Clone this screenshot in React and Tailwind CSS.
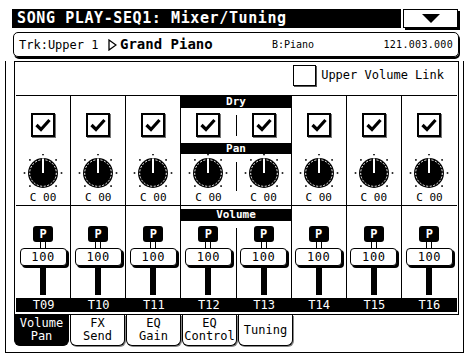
import React from "react";

const mono = { fontFamily: '"DejaVu Sans Mono", "Liberation Mono", monospace' };

const tracks = ["T09", "T10", "T11", "T12", "T13", "T14", "T15", "T16"];
const tabs = [
  ["Volume", "Pan"],
  ["FX", "Send"],
  ["EQ", "Gain"],
  ["EQ", "Control"],
  ["Tuning"],
];

function CheckBox() {
  return (
    <div className="w-[24px] h-[24px] border-2 border-black bg-white shadow-[1px_1px_0_#777] flex items-center justify-center">
      <svg width="18" height="16" viewBox="0 0 18 16">
        <path d="M2.5 8 L7 12.5 L15.5 3" fill="none" stroke="black" strokeWidth="3.2" />
      </svg>
    </div>
  );
}

function Knob() {
  const dots = [0, 45, 90, 135, -45, -90, -135].map((a) => {
    const r = (a * Math.PI) / 180;
    return [20 + 18.5 * Math.sin(r), 19 - 18.5 * Math.cos(r)];
  });
  return (
    <svg width="40" height="38" viewBox="0 0 40 38">
      {dots.map(([x, y], i) => (
        <rect key={i} x={x - 0.8} y={y - 0.8} width="1.6" height="1.6" fill="black" />
      ))}
      <circle cx="20" cy="19" r="15" fill="black" />
      <circle cx="20" cy="19" r="13.3" fill="none" stroke="white" strokeWidth="1" strokeDasharray="2 1.6" />
      <line x1="20" y1="19" x2="20" y2="4.5" stroke="white" strokeWidth="2" />
    </svg>
  );
}

function KnobCell() {
  return (
    <div className="flex flex-col items-center">
      <Knob />
      <div className="text-[11px] leading-[12px]">C 00</div>
    </div>
  );
}

function Fader() {
  return (
    <div className="flex flex-col items-center">
      <div className="w-[20px] h-[16px] rounded-[3px] bg-black text-white text-[12px] leading-[16px] font-bold text-center">P</div>
      <div className="w-[6px] h-[8px] border border-black bg-white -mt-px" />
      <div className="w-[47px] h-[18px] rounded-[4px] border border-black bg-white shadow-[2px_2px_0_#000] text-[12px] leading-[16px] tracking-[0.6px] text-center -mt-px">
        100
      </div>
      <div className="w-[6px] h-[29px] bg-black" />
    </div>
  );
}

function NormalTop() {
  return (
    <div className="flex flex-col items-center pt-[17px]">
      <CheckBox />
      <div className="mt-[17px]">
        <KnobCell />
      </div>
    </div>
  );
}

export default function App() {
  return (
    <div className="w-[467px] h-[356px] bg-white text-black overflow-hidden pt-[9px]" style={mono}>
      {/* title */}
      <div className="flex ml-[12px] gap-[2px]">
        <div className="w-[389px] h-[19px] bg-black text-white font-bold text-[15px] leading-[19px] tracking-[0.6px] pl-[5px]">
          SONG PLAY-SEQ1: Mixer/Tuning
        </div>
        <div className="w-[55px] h-[19px] border border-black bg-white shadow-[2px_2px_0_#000] flex items-center justify-center">
          <svg width="18" height="9" viewBox="0 0 18 9">
            <path d="M0 0 H18 L9 9 Z" fill="black" />
          </svg>
        </div>
      </div>

      {/* track row */}
      <div className="ml-[13px] mt-[4px] w-[446px] h-[25px] rounded-[5px] border border-black shadow-[1px_2px_0_#000] flex items-center pl-[5px] pr-[5px]">
        <span className="text-[12px] w-[89px]">Trk:Upper 1</span>
        <svg width="9" height="12" viewBox="0 0 9 12" className="mr-[3px]">
          <path d="M1 1 L8 6 L1 11 Z" fill="none" stroke="black" strokeWidth="1.3" />
        </svg>
        <span className="text-[14px] font-bold w-[152px]">Grand Piano</span>
        <span className="text-[10px]">B:Piano</span>
        <span className="text-[10px] ml-auto tracking-[0.3px]">121.003.000</span>
      </div>

      {/* main frame */}
      <div className="ml-[5px] mt-[4px] w-[459px] h-[292px] border-l border-r border-b border-black">
        <div className="ml-[8px] w-[445px] border border-black">
          <div className="h-[33px] flex items-start justify-end pt-[3px] pr-[14px] gap-[5px]">
            <div className="w-[23px] h-[21px] border border-black shadow-[1px_1px_0_#555]" />
            <span className="text-[12px] leading-[21px]">Upper Volume Link</span>
          </div>
          <div className="border-t border-black grid grid-cols-8 mx-px">
            {/* top rows */}
            {[0, 1, 2].map((i) => (
              <div key={i} className="h-[109px] border-r border-black">
                <NormalTop />
              </div>
            ))}
            <div className="col-span-2 h-[109px] border-r border-black flex flex-col">
              <div className="h-[12px] bg-black text-white text-[11px] leading-[12px] font-bold text-center">Dry</div>
              <div className="h-[35px] flex">
                <div className="flex-1 flex justify-center pt-[5px]"><CheckBox /></div>
                <div className="w-px bg-black my-[7px]" />
                <div className="flex-1 flex justify-center pt-[5px]"><CheckBox /></div>
              </div>
              <div className="h-[11px] bg-black text-white text-[11px] leading-[11px] font-bold text-center">Pan</div>
              <div className="flex flex-1">
                <div className="flex-1 flex justify-center"><KnobCell /></div>
                <div className="w-px bg-black mt-[8px] mb-[14px]" />
                <div className="flex-1 flex justify-center"><KnobCell /></div>
              </div>
            </div>
            {[5, 6, 7].map((i) => (
              <div key={i} className={`h-[109px] ${i < 7 ? "border-r" : ""} border-black`}>
                <NormalTop />
              </div>
            ))}

            {/* fader rows */}
            {[0, 1, 2].map((i) => (
              <div key={i} className="h-[93px] border-r border-t border-black flex justify-center pt-[20px]">
                <Fader />
              </div>
            ))}
            <div className="col-span-2 h-[93px] border-r border-t border-black flex flex-col">
              <div className="h-[12px] mt-[3px] bg-black text-white text-[11px] leading-[12px] font-bold text-center">Volume</div>
              <div className="flex flex-1 pt-[5px]">
                <div className="flex-1 flex justify-center"><Fader /></div>
                <div className="w-px bg-black mt-[2px]" />
                <div className="flex-1 flex justify-center"><Fader /></div>
              </div>
            </div>
            {[5, 6, 7].map((i) => (
              <div key={i} className={`h-[93px] border-t ${i < 7 ? "border-r" : ""} border-black flex justify-center pt-[20px]`}>
                <Fader />
              </div>
            ))}

            {/* track labels */}
            {tracks.map((t) => (
              <div key={t} className="h-[14px] bg-black text-white text-[12px] leading-[14px] text-center mb-[2px]">
                {t}
              </div>
            ))}
          </div>
        </div>

        {/* tabs */}
        <div className="flex ml-[8px] gap-[1px]">
          {tabs.map((t, i) => (
            <div
              key={i}
              className={`w-[55px] h-[31px] rounded-b-[6px] border border-t-0 border-black flex flex-col items-center justify-center text-[12px] leading-[13px] ${
                i === 0 ? "bg-black text-white" : "bg-white shadow-[1px_1px_0_#888]"
              }`}
            >
              {t.map((l) => (
                <span key={l}>{l}</span>
              ))}
            </div>
          ))}
        </div>
      </div>
    </div>
  );
}
